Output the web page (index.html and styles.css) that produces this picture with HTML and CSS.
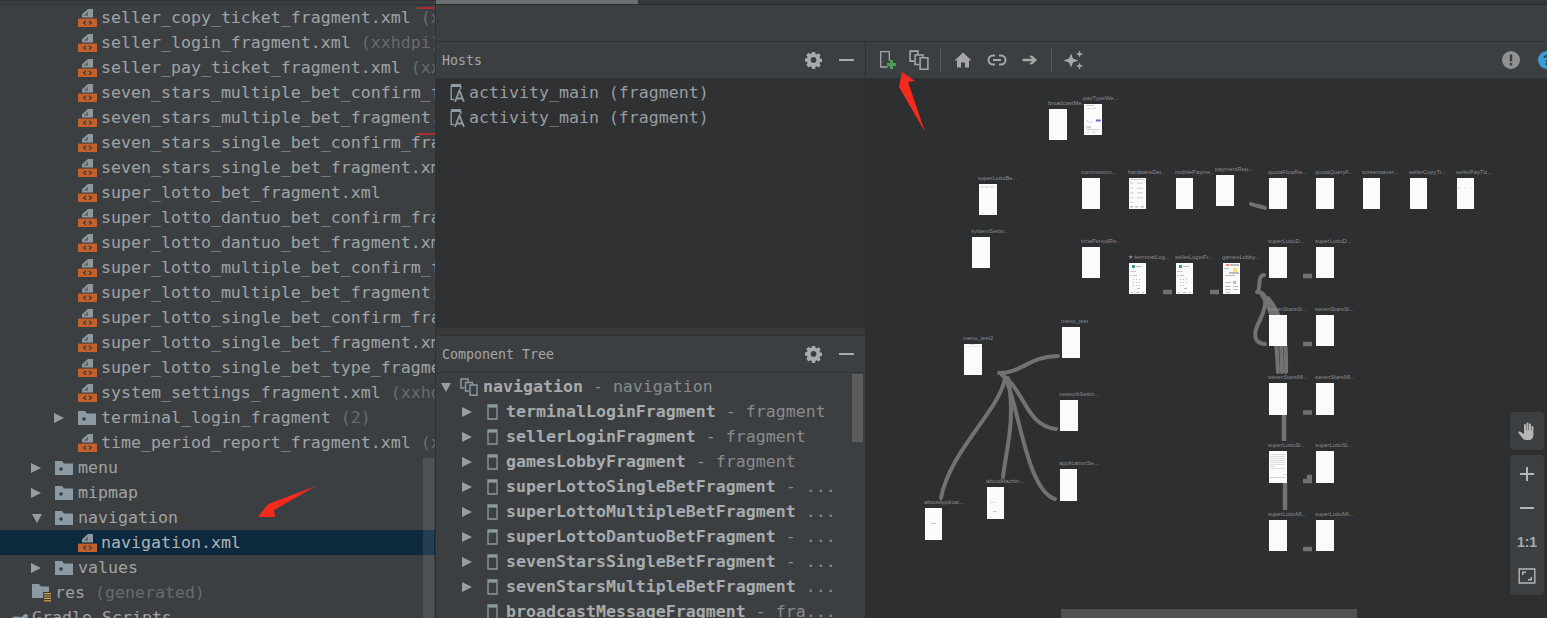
FILE: index.html
```html
<!DOCTYPE html>
<html lang="en">
<head>
<meta charset="utf-8">
<title>Navigation editor</title>
<link rel="stylesheet" href="styles.css">
</head>
<body>
<svg class="defs" width="0" height="0" aria-hidden="true">
  <symbol id="i-xml" viewBox="0 0 19 18">
    <path fill="#8d979e" d="M10 0h5v8.400H4V5.200L10 0z"/>
    <path fill="#3c3f41" d="M5.600 6.800 10 2.600v4.200z" opacity=".55"/>
    <rect y="9.600" width="19" height="8.400" fill="#c4602a"/>
    <path fill="none" stroke="#3c3f41" stroke-width="1.300" d="M8 11.800l-2.400 2 2.400 2M11 11.800l2.400 2-2.400 2"/>
  </symbol>
  <symbol id="i-folder" viewBox="0 0 18 14">
    <path fill="#8b9aa3" d="M0 0h7l2 2.500h9V14H0z"/>
    <circle cx="6" cy="8" r="1.800" fill="#3c3f41"/>
  </symbol>
  <symbol id="i-res" viewBox="0 0 19 18">
    <path fill="#8b9aa3" d="M0 0h7l2 2.500h8V14H0z"/>
    <path fill="#3c3f41" d="M11 8h8v10h-8z"/>
    <path stroke="#d9a343" stroke-width="1.200" d="M12 9.600h7M12 12h7M12 14.400h7M12 16.800h7"/>
  </symbol>
  <symbol id="i-host" viewBox="0 0 15 18">
    <path fill="#8b9aa3" d="M1 0h10v3H1z"/>
    <path fill="none" stroke="#8b9aa3" stroke-width="1.400" d="M1.200 2v13.500h3M10.800 2v3"/>
    <path fill="none" stroke="#8b9aa3" stroke-width="1.800" d="M5 18 9.500 6.500 14 18M6.500 14.500h6"/>
  </symbol>
  <symbol id="i-device" viewBox="0 0 11 16">
    <path fill="none" stroke="#8b9aa3" stroke-width="1.300" d="M1 1h9v14H1z"/>
    <path fill="#8b9aa3" d="M1 1h9v2.600H1z"/>
  </symbol>
  <symbol id="i-copies" viewBox="0 0 18 18">
    <path fill="none" stroke="currentColor" stroke-width="1.400" d="M4.500 10H1V1h7v3.500M9 13H5.500V4.500h7V7M10 7h7v10.300h-7z"/>
  </symbol>
  <symbol id="i-gear" viewBox="0 0 16 16">
    <path fill="currentColor" fill-rule="evenodd" d="M6.500 0h3l.4 2.200 1.300.6 1.900-1.200 2.100 2.100-1.200 1.900.6 1.300 2.200.4v3l-2.200.4-.6 1.300 1.200 1.900-2.100 2.100-1.900-1.200-1.300.6-.4 2.200h-3l-.4-2.200-1.300-.6-1.900 1.200L.7 13.500l1.200-1.900-.6-1.300L-.9 9.900v-3l2.200-.4.600-1.300L.7 3.300l2.100-2.100 1.900 1.200 1.300-.6zM8 5.400a2.900 2.900 0 1 0 0 5.800 2.900 2.900 0 0 0 0-5.800z" transform="translate(.6 -.3) scale(.93)"/>
  </symbol>
</svg>

<div class="app">
  <aside class="project">
    <div class="tree">
      <div class="row l3"><span class="twist"></span><svg class="ic-xml"><use href="#i-xml"/></svg><span class="name">seller_copy_ticket_fragment.xml <i>(xxhdpi)</i></span></div>
      <div class="row l3"><span class="twist"></span><svg class="ic-xml"><use href="#i-xml"/></svg><span class="name">seller_login_fragment.xml <i>(xxhdpi)</i></span></div>
      <div class="row l3"><span class="twist"></span><svg class="ic-xml"><use href="#i-xml"/></svg><span class="name">seller_pay_ticket_fragment.xml <i>(xxhdpi)</i></span></div>
      <div class="row l3"><span class="twist"></span><svg class="ic-xml"><use href="#i-xml"/></svg><span class="name">seven_stars_multiple_bet_confirm_fragment.xml</span></div>
      <div class="row l3"><span class="twist"></span><svg class="ic-xml"><use href="#i-xml"/></svg><span class="name">seven_stars_multiple_bet_fragment.xml</span></div>
      <div class="row l3"><span class="twist"></span><svg class="ic-xml"><use href="#i-xml"/></svg><span class="name">seven_stars_single_bet_confirm_fragment.xml</span></div>
      <div class="row l3"><span class="twist"></span><svg class="ic-xml"><use href="#i-xml"/></svg><span class="name">seven_stars_single_bet_fragment.xml</span></div>
      <div class="row l3"><span class="twist"></span><svg class="ic-xml"><use href="#i-xml"/></svg><span class="name">super_lotto_bet_fragment.xml</span></div>
      <div class="row l3"><span class="twist"></span><svg class="ic-xml"><use href="#i-xml"/></svg><span class="name">super_lotto_dantuo_bet_confirm_fragment.xml</span></div>
      <div class="row l3"><span class="twist"></span><svg class="ic-xml"><use href="#i-xml"/></svg><span class="name">super_lotto_dantuo_bet_fragment.xml</span></div>
      <div class="row l3"><span class="twist"></span><svg class="ic-xml"><use href="#i-xml"/></svg><span class="name">super_lotto_multiple_bet_confirm_fragment.xml</span></div>
      <div class="row l3"><span class="twist"></span><svg class="ic-xml"><use href="#i-xml"/></svg><span class="name">super_lotto_multiple_bet_fragment.xml</span></div>
      <div class="row l3"><span class="twist"></span><svg class="ic-xml"><use href="#i-xml"/></svg><span class="name">super_lotto_single_bet_confirm_fragment.xml</span></div>
      <div class="row l3"><span class="twist"></span><svg class="ic-xml"><use href="#i-xml"/></svg><span class="name">super_lotto_single_bet_fragment.xml</span></div>
      <div class="row l3"><span class="twist"></span><svg class="ic-xml"><use href="#i-xml"/></svg><span class="name">super_lotto_single_bet_type_fragment.xml</span></div>
      <div class="row l3"><span class="twist"></span><svg class="ic-xml"><use href="#i-xml"/></svg><span class="name">system_settings_fragment.xml <i>(xxhdpi)</i></span></div>
      <div class="row l3"><span class="twist closed"></span><svg class="ic-folder"><use href="#i-folder"/></svg><span class="name">terminal_login_fragment <i>(2)</i></span></div>
      <div class="row l3"><span class="twist"></span><svg class="ic-xml"><use href="#i-xml"/></svg><span class="name">time_period_report_fragment.xml <i>(xxhdpi)</i></span></div>
      <div class="row l2"><span class="twist closed"></span><svg class="ic-folder"><use href="#i-folder"/></svg><span class="name">menu</span></div>
      <div class="row l2"><span class="twist closed"></span><svg class="ic-folder"><use href="#i-folder"/></svg><span class="name">mipmap</span></div>
      <div class="row l2"><span class="twist open"></span><svg class="ic-folder"><use href="#i-folder"/></svg><span class="name">navigation</span></div>
      <div class="row l3 selected"><span class="twist"></span><svg class="ic-xml"><use href="#i-xml"/></svg><span class="name">navigation.xml</span></div>
      <div class="row l2"><span class="twist closed"></span><svg class="ic-folder"><use href="#i-folder"/></svg><span class="name">values</span></div>
      <div class="row l1"><span class="twist"></span><svg class="ic-xml"><use href="#i-res"/></svg><span class="name">res <i>(generated)</i></span></div>
      <div class="row l0"><span class="twist"></span><svg class="ic-gradle" viewBox="0 0 20 12"><path fill="#8b9aa3" d="M0 12c0-5 3-7 7-7 3 0 5 1 7 0 1-3 5-4 6-1 0 2-2 3-3 3 0 2-1 3-1 5h-3l-1-3H7l-1 3z"/></svg><span class="name">Gradle Scripts</span></div>
    </div>
    <span class="mark mark-a"></span>
    <span class="mark mark-b"></span>
    <span class="vthumb"></span>
    <svg class="red-arrow arrow-left" viewBox="250 480 70 40"><polygon points="316,486 268,504 258,517 275,517 274,510"/></svg>
  </aside>

  <main class="main">
    <div class="hscroll"><span class="hscroll-thumb"></span></div>
    <div class="blank-bar"></div>
    <div class="split">
      <section class="side">
        <header class="panel-head">
          <span class="panel-title">Hosts</span>
          <svg class="gear"><use href="#i-gear"/></svg>
          <span class="minus"></span>
        </header>
        <div class="hosts">
          <div class="host"><svg class="ic-host"><use href="#i-host"/></svg>activity_main (fragment)</div>
          <div class="host"><svg class="ic-host"><use href="#i-host"/></svg>activity_main (fragment)</div>
        </div>
        <div class="splitter"></div>
        <header class="panel-head">
          <span class="panel-title">Component Tree</span>
          <svg class="gear"><use href="#i-gear"/></svg>
          <span class="minus"></span>
        </header>
        <div class="comp">
          <div class="crow root"><span class="twist open"></span><svg class="ic-copies"><use href="#i-copies"/></svg><b>navigation</b><em> - navigation</em></div>
          <div class="crow"><span class="twist closed"></span><svg class="ic-device"><use href="#i-device"/></svg><b>terminalLoginFragment</b><em> - fragment</em></div>
          <div class="crow"><span class="twist closed"></span><svg class="ic-device"><use href="#i-device"/></svg><b>sellerLoginFragment</b><em> - fragment</em></div>
          <div class="crow"><span class="twist closed"></span><svg class="ic-device"><use href="#i-device"/></svg><b>gamesLobbyFragment</b><em> - fragment</em></div>
          <div class="crow"><span class="twist closed"></span><svg class="ic-device"><use href="#i-device"/></svg><b>superLottoSingleBetFragment</b><em> - ...</em></div>
          <div class="crow"><span class="twist closed"></span><svg class="ic-device"><use href="#i-device"/></svg><b>superLottoMultipleBetFragment</b><em> ...</em></div>
          <div class="crow"><span class="twist closed"></span><svg class="ic-device"><use href="#i-device"/></svg><b>superLottoDantuoBetFragment</b><em> - ...</em></div>
          <div class="crow"><span class="twist closed"></span><svg class="ic-device"><use href="#i-device"/></svg><b>sevenStarsSingleBetFragment</b><em> - ...</em></div>
          <div class="crow"><span class="twist closed"></span><svg class="ic-device"><use href="#i-device"/></svg><b>sevenStarsMultipleBetFragment</b><em> ...</em></div>
          <div class="crow"><span class="twist"></span><svg class="ic-device"><use href="#i-device"/></svg><b>broadcastMessageFragment</b><em> - fra...</em></div>
          <span class="comp-thumb"></span>
        </div>
      </section>

      <section class="design">
        <div class="tools">
          <svg class="tool" viewBox="0 0 20 20"><path fill="none" stroke="currentColor" stroke-width="1.300" d="M10.500 17H3.700V1.700h8.600v9"/><path fill="#4c9f50" d="M13 10h3v3h3v3h-3v3h-3v-3h-3v-3h3z"/></svg>
          <svg class="tool"><use href="#i-copies"/></svg>
          <span class="tsep"></span>
          <svg class="tool" viewBox="0 0 20 20"><path fill="currentColor" d="M10 2.500 18.500 10.500H16v7h-4v-5H8v5H4v-7H1.500z"/></svg>
          <svg class="tool link" viewBox="0 0 20 20"><path fill="none" stroke="currentColor" stroke-width="2" d="M8 5.500H6a4.500 4.500 0 0 0 0 9h2M12 5.500h2a4.500 4.500 0 0 1 0 9h-2M6 10h8"/></svg>
          <svg class="tool arrow" viewBox="0 0 20 20"><path fill="currentColor" d="M2.500 8.800h9.500l-3-3h3.400l4.700 4.200-4.700 4.200H9l3-3H2.500z"/></svg>
          <span class="tsep"></span>
          <svg class="tool" viewBox="0 0 20 20"><path fill="currentColor" d="M7 3.500l2 5 5.500 2-5.500 2-2 5-2-5-5.500-2 5.500-2zM15.500 .5l1 2.500 2.500 1-2.500 1-1 2.500-1-2.500-2.500-1 2.500-1zM15.500 12.500l1 2.500 2.500 1-2.500 1-1 2.500-1-2.500-2.500-1 2.500-1z"/></svg>
          <svg class="tool warn" viewBox="0 0 20 20"><circle cx="10" cy="10" r="9" fill="#8f9193"/><path fill="#3c3f41" d="M8.800 4.500h2.400v7H8.800zM8.800 13h2.400v2.400H8.800z"/></svg>
          <span class="help">?</span>
        </div>
        <div class="canvas">
          <svg class="edges" viewBox="866 79 681 539" width="681" height="539">
            <g class="edge">
              <path d="M999 373C1022 373 1030 356 1058 356"/>
              <path d="M1002 375C1025 390 1025 425 1056 429"/>
              <path d="M1003 375C1018 395 1025 490 1055 499"/>
              <path d="M1008 378C1016 420 1006 450 1003 477"/>
              <path d="M1005 378C1000 410 950 450 941 498"/>
              <path d="M1251 204C1256 206 1260 206 1265 208"/>
              <path d="M1264 275C1257 276 1261 285 1258 292"/>
              <path d="M1257 292C1268 292 1267 305 1260 320C1252 335 1254 343 1265 344"/>
              <path d="M1262 295C1272 310 1276 325 1278 372"/>
              <path d="M1265 297C1278 315 1282 335 1282 372"/>
              <path d="M1268 298C1282 315 1287 335 1286 372"/>
              <path class="short" d="M1284 415V441"/>
              <path class="short" d="M1285 483V510"/>
              <path class="stub" d="M1163 292h9"/>
              <path class="stub" d="M1210 292h9"/>
              <path class="stub" d="M1303 276h9"/>
              <path class="stub" d="M1303 344h9"/>
              <path class="stub" d="M1303 412.500h9"/>
              <path class="stub" d="M1303 481h9"/>
              <path class="stub" d="M1307 477h5"/>
              <path class="stub" d="M1303 549h9"/>
            </g>
          </svg>

          <div class="node" style="left:183px;top:30px"><span>broadcastMe...</span></div>
          <div class="node" style="left:218px;top:25px"><span>payTypeWe...</span><svg viewBox="0 0 18 32"><path fill="#ccc" d="M2 1h8v1H2zM3 4h3v1H3zM8 4h4v1H8zM2 17h2v1H2zM5 18h3v1H5zM2 23h5v2H2zM2 26h13v1H2zM3 29h2v1H3zM9 29h2v1H9z"/><path fill="#8354d4" d="M12 16h5v2h-5z"/></svg></div>
          <div class="node" style="left:216px;top:99px"><span>commission...</span></div>
          <div class="node narrow" style="left:263px;top:99px"><span>hardwareDet...</span><svg viewBox="0 0 17 32"><path fill="#bbb" d="M1 1h15v.8H1zM1 5h3v.8H1zM8 5h6v.8H8zM1 10h3v.8H1zM8 10h6v.8H8zM1 15h3v.8H1zM8 15h6v.8H8zM1 20h3v.8H1zM8 20h6v.8H8zM1 25h3v.8H1zM1 29h3v1.500H1zM6 29h3v1.500H6zM12 29h3v1.500h-3z"/></svg></div>
          <div class="node narrow" style="left:310px;top:99px"><span>mobilePayme...</span></div>
          <div class="node" style="left:350px;top:96px"><span>paymentRep...</span></div>
          <div class="node" style="left:403px;top:99px"><span>quotaFlowRe...</span></div>
          <div class="node" style="left:450px;top:99px"><span>quotaQueryF...</span></div>
          <div class="node narrow" style="left:497px;top:99px"><span>screensaver...</span></div>
          <div class="node narrow" style="left:544px;top:99px"><span>sellerCopyTi...</span></div>
          <div class="node narrow" style="left:591px;top:99px"><span>sellerPayTic...</span><svg viewBox="0 0 17 32"><path fill="#ccc" d="M0 10h3v.8H0zM7 10h2v.8H7zM13 10h2v.8h-2z"/></svg></div>
          <div class="node" style="left:113px;top:105px"><span>superLottoBe...</span><svg viewBox="0 0 18 31"><path fill="#ddd" d="M1 2h16v.7H1zM1 3h3v.7H1zM6 3h3v.7H6zM11 3h3v.7h-3z"/></svg></div>
          <div class="node" style="left:106px;top:158px"><span>systemSettin...</span></div>
          <div class="node" style="left:216px;top:168px"><span>timePeriodRe...</span></div>
          <div class="node narrow" style="left:263px;top:184px"><span>★ terminalLog...</span><svg viewBox="0 0 17 31"><path fill="#3a9d8c" d="M3 2h3v3H3z"/><path fill="#bbb" d="M7 3h6v1H7zM1 8h6v.8H1zM1 12h2v.8H1zM4 12h4v1H4zM4 16h1v1H4zM7 16h1v1H7zM10 16h1v1h-1zM4 19h1v1H4zM7 19h1v1H7zM10 19h1v1h-1zM4 22h1v1H4zM7 22h1v1H7zM10 22h1v1h-1zM8 25h3v1H8zM2 29h2v1H2zM7 29h3v1H7zM13 29h2v1h-2z"/></svg></div>
          <div class="node narrow" style="left:310px;top:184px"><span>sellerLoginFr...</span><svg viewBox="0 0 17 31"><path fill="#3a9d8c" d="M3 2h3v3H3z"/><path fill="#bbb" d="M7 3h6v1H7zM1 8h6v.8H1zM1 12h2v.8H1zM4 12h4v1H4zM4 16h1v1H4zM7 16h1v1H7zM10 16h1v1h-1zM4 19h1v1H4zM7 19h1v1H7zM10 19h1v1h-1zM4 22h1v1H4zM7 22h1v1H7zM8 25h3v1H8zM2 29h2v1H2zM7 29h3v1H7zM13 29h2v1h-2z"/></svg></div>
          <div class="node narrow" style="left:357px;top:184px"><span>gamesLobby...</span><svg viewBox="0 0 17 31"><path fill="#e88" d="M3 1h3v2H3z"/><path fill="#f3e27a" d="M10 5h4v4h-4z"/><path fill="#bbb" d="M7 1h9v2H7zM1 5h5v1H1zM6 9h10v2H6zM2 12h10v1H2zM10 18h3v3h-3zM2 19h6v1H2zM2 23h5v1H2zM10 23h5v1h-5zM2 26h6v1H2zM10 26h5v1h-5zM3 29h4v1H3z"/></svg></div>
          <div class="node" style="left:403px;top:168px"><span>superLottoD...</span></div>
          <div class="node" style="left:450px;top:168px"><span>superLottoD...</span></div>
          <div class="node" style="left:403px;top:236px"><span>sevenStarsSi...</span></div>
          <div class="node" style="left:450px;top:236px"><span>sevenStarsSi...</span></div>
          <div class="node tall" style="left:403px;top:304px"><span>sevenStarsMl...</span></div>
          <div class="node tall" style="left:450px;top:304px"><span>sevenStarsMl...</span></div>
          <div class="node tall" style="left:403px;top:372px"><span>superLottoSi...</span><svg viewBox="0 0 18 32"><path fill="#d4d4d4" d="M1 3h15v.7H1zM1 5h15v.7H1zM1 7h15v.7H1zM1 9h15v.7H1zM1 11h15v.7H1zM1 13h15v.7H1zM1 15h5v.7H1zM1 17h15v.7H1zM14 23h4v.7h-4zM1 26h16v1H1z"/></svg></div>
          <div class="node tall" style="left:450px;top:372px"><span>superLottoSi...</span></div>
          <div class="node" style="left:403px;top:441px"><span>superLottoMl...</span></div>
          <div class="node" style="left:450px;top:441px"><span>superLottoMl...</span></div>
          <div class="node" style="left:196px;top:248px"><span>menu_test</span></div>
          <div class="node" style="left:98px;top:265px"><span>menu_test2</span><svg viewBox="0 0 18 31"><path fill="#ddd" d="M6 0h5v1H6zM1 2h16v.5H1z"/></svg></div>
          <div class="node" style="left:194px;top:321px"><span>networkSettin...</span></div>
          <div class="node narrow tall" style="left:194px;top:390px"><span>applicationSe...</span></div>
          <div class="node narrow tall" style="left:121px;top:408px"><span>aboutMachin...</span><svg viewBox="0 0 17 32"><path fill="#ccc" d="M3 15h6v.6H3zM6 24h4v1H6z"/></svg></div>
          <div class="node narrow tall" style="left:59px;top:429px"><span>aboutApplicat...</span><svg viewBox="0 0 17 32"><path fill="#ccc" d="M6 15h5v1H6z"/></svg></div>

          <div class="float">
            <div class="fpanel hand">
              <svg class="ftool" viewBox="0 0 20 20"><path fill="#b4b6b8" d="M7 4a1 1 0 0 1 2 0v5h.5V2.500a1 1 0 0 1 2 0V9h.5V3.500a1 1 0 0 1 2 0V9.500h.4V6a1 1 0 0 1 2 0v8c0 3-2 5-5 5H9c-2 0-3-1-4-2.500L1.500 12c-.6-1 .5-2 1.500-1.400L7 13z"/></svg>
            </div>
            <div class="fpanel zoom">
              <svg class="ftool" viewBox="0 0 20 20"><path fill="#b4b6b8" d="M9 3h2v6h6v2h-6v6H9v-6H3V9h6z"/></svg>
              <svg class="ftool" viewBox="0 0 20 20"><path fill="#b4b6b8" d="M3 9h14v2H3z"/></svg>
              <span class="ftext">1:1</span>
              <svg class="ftool" viewBox="0 0 20 20"><path fill="none" stroke="#b4b6b8" stroke-width="1.400" d="M2.200 3h15.600v14H2.200z"/><path fill="#b4b6b8" d="M5 5.500h4V7H6.500v2H5zM15 14.500h-4V13h2.500v-2H15z"/></svg>
            </div>
          </div>
          <span class="canvas-scroll"></span>
        </div>
        <svg class="red-arrow arrow-up" viewBox="895 68 35 68"><polygon points="902,72 915,81 908,82 925,132 899,87"/></svg>
      </section>
    </div>
  </main>
</div>
</body>
</html>
```
FILE: styles.css
```css
* { box-sizing: border-box; }
html, body { margin: 0; height: 100%; overflow: hidden; background: #3c3f41; }
.defs { position: absolute; }
.app {
  display: flex; width: 1547px; height: 618px; overflow: hidden;
  font-family: "DejaVu Sans Mono", "Liberation Mono", monospace;
  font-size: 16.6px; color: #a0a3a5;
}

/* project tree */
.project {
  position: relative; flex: 0 0 436px; height: 618px; overflow: hidden;
  background: #3c3f41; border-top: 1px solid #34373a; border-right: 1px solid #2f3133;
}
.tree { padding-top: 4px; }
.tree::before { content: ""; display: block; height: 1px; margin-top: -1px; background: #2d2f31; }
.row { display: flex; align-items: center; height: 25px; white-space: nowrap; }
.row.l0 { padding-left: 0; }
.row.l1 { padding-left: 8px; }
.row.l2 { padding-left: 31px; }
.row.l3 { padding-left: 54px; }
.row.selected { background: #0d293e; color: #b0b4b6; }
.twist { flex: 0 0 24px; display: block; position: relative; height: 12px; }
.row.l0 .twist { flex-basis: 10px; }
.twist.closed::before {
  content: ""; position: absolute; left: 0; top: 1px;
  border-left: 10px solid #9a9da0; border-top: 5px solid transparent; border-bottom: 5px solid transparent;
}
.twist.open::before {
  content: ""; position: absolute; left: 1px; top: 2px;
  border-top: 9px solid #9a9da0; border-left: 5.500px solid transparent; border-right: 5.500px solid transparent;
}
.ic-xml { flex: 0 0 19px; width: 19px; height: 18px; margin-right: 4px; }
.ic-folder { flex: 0 0 18px; width: 18px; height: 14px; margin-right: 5px; }
.ic-gradle { flex: 0 0 18px; width: 18px; height: 11px; margin-right: 4px; }
.name { flex: 1; min-width: 0; overflow: hidden; }
.name i { font-style: normal; color: #676b6e; }
.mark { position: absolute; left: 417px; width: 18px; height: 2px; background: #a8302c; }
.mark-a { top: 6px; }
.mark-b { top: 132px; }
.vthumb { position: absolute; left: 423px; top: 457px; width: 11px; height: 160px; background: #fff; opacity: .1; }
.red-arrow { position: absolute; fill: #f5291c; }
.arrow-left { left: 250px; top: 479px; width: 70px; height: 40px; }
.arrow-up { left: 29px; top: 26px; width: 35px; height: 68px; }

/* main */
.main { flex: 1; min-width: 0; display: flex; flex-direction: column; height: 618px; }
.hscroll { flex: 0 0 5px; background: #35383a; border-bottom: 1px solid #2b2d2f; }
.hscroll-thumb { display: block; width: 202px; height: 4px; background: #6b6f73; }
.blank-bar { flex: 0 0 37px; background: #3c3f41; border-bottom: 1px solid #2e3032; }
.split { flex: 1; min-height: 0; display: flex; }

.side { flex: 0 0 430px; display: flex; flex-direction: column; border-right: 1px solid #2d2f31; background: #3c3f41; overflow: hidden; }
.panel-head {
  flex: 0 0 36px; display: flex; align-items: center; padding: 0 10px 0 6px;
  font-size: 13.300px; color: #a3a6a8; background: #3c3f41;
}
.panel-title { flex: 1; }
.gear { width: 17px; height: 17px; color: #a8aaac; margin-right: 17px; }
.minus { width: 15px; height: 2px; background: #a8aaac; margin-right: 1px; }
.hosts { flex: 0 0 250px; background: #2f3133; padding-top: 2px; }
.host { display: flex; align-items: center; height: 25px; padding-left: 14px; color: #9a9d9f; white-space: nowrap; }
.ic-host { width: 15px; height: 18px; margin-right: 4px; }
.splitter { flex: 0 0 8px; background: #37393b; border-bottom: 1px solid #2f3133; }
.comp { position: relative; flex: 1; padding-top: 1px; border-top: 1px solid #323436; overflow: hidden; white-space: nowrap; }
.crow { display: flex; align-items: center; height: 25px; padding-left: 26px; color: #a0a3a5; }
.crow.root { padding-left: 4px; }
.crow .twist { flex: 0 0 25px; }
.crow.root .twist { flex-basis: 20px; }
.crow b { color: #a8abad; font-weight: 700; }
.crow em { font-style: normal; color: #888b8e; white-space: pre; }
.ic-device { flex: 0 0 11px; width: 11px; height: 16px; margin-right: 8px; }
.ic-copies { flex: 0 0 18px; width: 18px; height: 18px; margin-right: 5px; color: #8b9aa3; }
.comp-thumb { position: absolute; left: 416px; top: 1px; width: 11px; height: 68px; background: #5a5c5e; }

/* design surface */
.design { position: relative; flex: 1; min-width: 0; display: flex; flex-direction: column; background: #2d2f31; }
.tools {
  flex: 0 0 37px; display: flex; align-items: center; gap: 12px; padding-left: 11px;
  background: #3c3f41; border-bottom: 1px solid #2e3032; color: #a4a6a8; overflow: hidden;
}
.tool { flex: none; width: 20px; height: 20px; }
.tool.link { margin-left: 2px; }
.tool.arrow { margin-left: 1px; }
.tsep { flex: none; width: 1px; height: 22px; margin-left: -1px; background: #55585a; }
.tool.warn { margin-left: auto; }
.help {
  flex: none; width: 18px; height: 18px; margin: 0 -9px 0 5px; border-radius: 50%; background: #389fd6;
  color: #3c3f41; font: 700 14px/18px "Liberation Sans", sans-serif; text-align: center;
}
.canvas { position: relative; flex: 1; min-height: 0; overflow: hidden; }
.edges { position: absolute; left: 0; top: 0; }
.edge path { fill: none; stroke: #727272; stroke-width: 4px; stroke-linecap: round; }
.edge .stub { stroke-width: 4.500px; stroke-linecap: butt; }
.edge .short { stroke-width: 4.500px; stroke-linecap: butt; }
.node { position: absolute; width: 18px; height: 31px; background: #fbfbfb; }
.node.narrow { width: 17px; }
.node.tall { height: 32px; }
.node svg { display: block; width: 100%; height: 100%; }
.node span {
  position: absolute; left: -1px; bottom: 100%; margin-bottom: 2px;
  font: 5.800px/7px "Liberation Sans", sans-serif; color: #8c8c8c; white-space: nowrap;
}
.float { position: absolute; right: 3px; bottom: 23px; display: flex; flex-direction: column; gap: 5px; }
.fpanel { width: 34px; background: #3c3f41; border-radius: 4px; display: flex; flex-direction: column; align-items: center; }
.fpanel.hand { height: 38px; justify-content: center; }
.fpanel.zoom { height: 140px; padding-top: 9px; gap: 14px; }
.ftool { flex: none; width: 20px; height: 20px; }
.ftext { height: 20px; font: 700 14px/20px "Liberation Sans", sans-serif; color: #a8aaac; }
.canvas-scroll { position: absolute; left: 195px; bottom: 0; width: 296px; height: 9px; background: #4f5153; }
```
